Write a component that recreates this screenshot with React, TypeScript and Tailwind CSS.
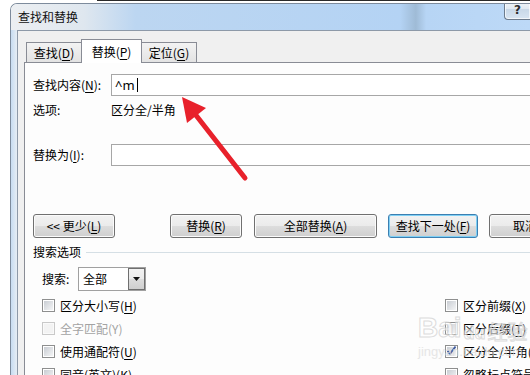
import React from "react";

const U = ({ c }: { c: string }) => <span className="underline underline-offset-[2px]">{c}</span>;

const btnBase =
  "flex h-full shrink-0 items-center justify-center rounded-[3px] border text-[12px] text-black";
const btnGray =
  "border-[#707070] bg-[linear-gradient(#f2f2f2,#ebebeb_50%,#dddddd_50%,#cfcfcf)] shadow-[inset_0_0_0_1px_#fbfbfb]";
const btnFocus =
  "border-[#3c7fb1] bg-[linear-gradient(#f2f2f2,#ebebeb_50%,#dddddd_50%,#cfcfcf)] shadow-[inset_0_0_0_1px_#7fd0f5]";

function Check({ label, checked, disabled }: { label: React.ReactNode; checked?: boolean; disabled?: boolean }) {
  return (
    <div className="flex h-[23px] items-center gap-[5px]">
      <span
        className={`flex h-[13px] w-[13px] items-center justify-center border ${
          disabled ? "border-[#c9c9c9] bg-[#fafafa]" : "border-[#8e8f8f] bg-white"
        }`}
      >
        <span
          className={`relative h-[9px] w-[9px] ${
            disabled ? "bg-[#f3f3f3]" : "bg-[linear-gradient(135deg,#c9cdd3,#f4f5f6)]"
          }`}
        >
          {checked && (
            <svg className="absolute left-[-1px] top-[-2px]" width="11" height="11" viewBox="0 0 11 11">
              <path d="M1.5 6 L4 8.8 L9.5 1.5" fill="none" stroke="#3e5aa0" strokeWidth="1.8" />
            </svg>
          )}
        </span>
      </span>
      <span className={disabled ? "text-[#a3a3a3]" : "text-black"}>{label}</span>
    </div>
  );
}

export default function App() {
  return (
    <div className="relative h-[375px] w-[530px] overflow-hidden bg-white font-['Noto_Sans_CJK_SC','Noto_Sans',sans-serif] text-[12px] leading-none text-black">
      {/* background behind the glass */}
      <div className="h-[3px]">
        <div className="ml-[97px] h-px bg-[#2a2a2a]" />
      </div>

      {/* window */}
      <div className="ml-[10px] w-[520px] overflow-hidden rounded-tl-[7px] border-l border-t border-[#7d8b9c]">
        {/* title bar */}
        <div className="flex h-[26px] items-center bg-[linear-gradient(90deg,#eceff2_0%,#dfe7ef_14%,#bcd6f1_24%,#b4d3f4_75%,#9fbbd6_78%,#b7d5f5_80%,#bdd9f7_100%)] pl-[7px]">
          <span className="text-[12px] text-[#111]">查找和替换</span>
          <div className="-mt-[4px] ml-auto flex h-[20px] w-[26px] items-center justify-center self-start rounded-bl-[4px] border-b border-l border-[#6c7b8d] bg-[linear-gradient(#f4f7fa,#dfe8f1_50%,#c9d8e8_50%,#d8e5f2)] shadow-[inset_0_0_0_1px_#ffffffaa]">
            <span className="font-['DejaVu_Sans',sans-serif] text-[12px] font-bold text-[#2b2b2b]">?</span>
          </div>
        </div>

        {/* client row */}
        <div className="flex">
          <div className="w-[6px] shrink-0 bg-[linear-gradient(90deg,#c7dcf1,#e6edf4)]" />
          <div className="flex-1 border-l border-t border-[#8d99a8] bg-[#f0f0f0] pl-[6px] pt-[8px]">
            {/* tabs */}
            <div className="relative z-10 -mb-px flex h-[24px] items-end pl-[2px]">
              <div className="flex h-[21px] w-[56px] items-center justify-center border border-[#898c95] bg-[linear-gradient(#f3f3f3,#e3e3e3)] pt-[1px]">
                查找(<U c="D" />)
              </div>
              <div className="-ml-px flex h-[24px] w-[61px] items-center justify-center border-l border-r border-t border-[#898c95] bg-white">
                替换(<U c="P" />)
              </div>
              <div className="-ml-px flex h-[21px] w-[56px] items-center justify-center border border-[#898c95] bg-[linear-gradient(#f3f3f3,#e3e3e3)] pt-[1px]">
                定位(<U c="G" />)
              </div>
            </div>

            {/* panel */}
            <div className="h-[330px] w-[620px] border-l border-t border-[#898c95] bg-[#fdfdfd] pl-[8px]">
              <div className="mt-[11px] flex h-[22px] items-center">
                <span className="w-[78px] shrink-0">
                  查找内容(<U c="N" />):
                </span>
                <div className="flex h-full flex-1 items-center border border-[#a7a7a7] bg-white pl-[3px] text-[13px]">
                  <span className="font-['Noto_Sans',sans-serif]">^m</span>
                  <span className="ml-[2px] h-[14px] w-px bg-black" />
                </div>
              </div>

              <div className="mt-[6px] flex h-[16px] items-center">
                <span className="w-[78px] shrink-0">选项:</span>
                <span>区分全/半角</span>
              </div>

              <div className="mt-[26px] flex h-[22px] items-center">
                <span className="w-[78px] shrink-0">
                  替换为(<U c="I" />):
                </span>
                <div className="h-full flex-1 border border-[#a7a7a7] bg-white" />
              </div>

              {/* buttons */}
              <div className="mt-[48px] flex h-[24px]">
                <div className={`${btnBase} ${btnGray} w-[82px]`}>
                  &lt;&lt; 更少(<U c="L" />)
                </div>
                <div className={`${btnBase} ${btnGray} ml-[55px] w-[72px]`}>
                  替换(<U c="R" />)
                </div>
                <div className={`${btnBase} ${btnGray} ml-[12px] w-[123px]`}>
                  全部替换(<U c="A" />)
                </div>
                <div className={`${btnBase} ${btnFocus} ml-[11px] w-[90px]`}>
                  查找下一处(<U c="F" />)
                </div>
                <div className={`${btnBase} ${btnGray} ml-[11px] w-[72px]`}>取消</div>
              </div>

              {/* search options */}
              <div className="mt-[6px] flex h-[16px] items-center">
                <span>搜索选项</span>
                <div className="ml-[5px] h-px flex-1 bg-[#d5dfe5]" />
              </div>

              <div className="mt-[7px] flex h-[24px] items-center pl-[9px]">
                <span className="w-[36px] shrink-0">搜索:</span>
                <div className="flex h-full w-[68px] items-stretch border border-[#a0a0a0] bg-white">
                  <span className="flex flex-1 items-center pl-[4px]">全部</span>
                  <div className="flex w-[17px] items-center justify-center border border-[#6f6f6f] bg-[linear-gradient(#f2f2f2,#ebebeb_50%,#dddddd_50%,#cfcfcf)]">
                    <svg width="7" height="4" viewBox="0 0 7 4">
                      <path d="M0 0 H7 L3.5 4 Z" fill="#111" />
                    </svg>
                  </div>
                </div>
              </div>

              <div className="mt-[3px] grid grid-cols-[403px_200px] pl-[9px]">
                <div>
                  <Check label={<>区分大小写(<U c="H" />)</>} />
                  <Check label="全字匹配(Y)" disabled />
                  <Check label={<>使用通配符(<U c="U" />)</>} />
                  <Check label={<>同音(英文)(<U c="K" />)</>} />
                </div>
                <div>
                  <Check label={<>区分前缀(<U c="X" />)</>} />
                  <Check label={<>区分后缀(<U c="T" />)</>} />
                  <Check label={<>区分全/半角(<U c="M" />)</>} checked />
                  <Check label={<>忽略标点符号(<U c="S" />)</>} />
                </div>
              </div>
            </div>
          </div>
        </div>
      </div>

      {/* watermark */}
      <div className="pointer-events-none absolute left-[418px] top-[314px] text-[#d9d9d9] opacity-70">
        <div className="flex items-end gap-[2px]">
          <span className="font-['Liberation_Sans',sans-serif] text-[28px] font-bold leading-none text-white [-webkit-text-stroke:1px_#cfcfcf]">
            Bai
          </span>
          <span className="font-['Liberation_Sans',sans-serif] text-[18px] font-bold leading-none text-white [-webkit-text-stroke:1px_#cfcfcf]">
            du
          </span>
          <span className="text-[20px] leading-none text-white [-webkit-text-stroke:1px_#cfcfcf]">经验</span>
        </div>
        <div className="mt-[3px] font-['Liberation_Sans',sans-serif] text-[13px] leading-none text-[#dcdcdc]">
          jingyan.baidu.com
        </div>
      </div>

      {/* red arrow */}
      <svg className="pointer-events-none absolute left-0 top-0" width="530" height="375" viewBox="0 0 530 375">
        <line x1="245" y1="178" x2="195" y2="114" stroke="#e8212b" strokeWidth="5" strokeLinecap="round" />
        <polygon points="182,97 206,108 187,123" fill="#e8212b" />
      </svg>
    </div>
  );
}
